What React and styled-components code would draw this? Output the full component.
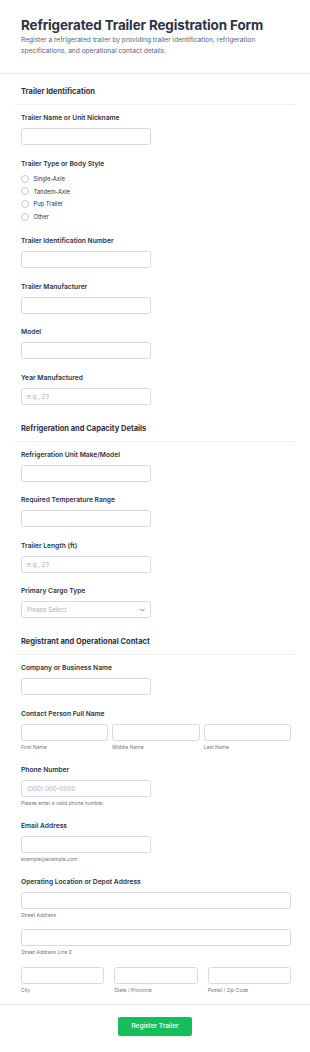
import React from "react";
import styled, { createGlobalStyle } from "styled-components";

const GlobalStyle = createGlobalStyle`
  html, body { margin: 0; padding: 0; background: #ffffff; }
  body { font-family: Inter, "Noto Sans", sans-serif; color: #2c3345; }
  * { box-sizing: border-box; }
`;

const Page = styled.div`
  width: 310px;
  background: #fff;
`;

const Header = styled.header`
  padding: 17px 21px 16px;
  border-bottom: 1px solid #e6e8ee;
`;

const Title = styled.h1`
  margin: 0;
  font-size: 13.4px;
  line-height: 17px;
  font-weight: 700;
  color: #2c3345;
  letter-spacing: -0.1px;
`;

const Description = styled.p`
  margin: 0.5px 0 0;
  font-size: 6.6px;
  line-height: 11px;
  color: #57647e;
`;

const Body = styled.main`
  padding: 0 15px 4px;
`;

const Section = styled.section`
  display: flex;
  flex-direction: column;
`;

const SectionHeading = styled.h2`
  margin: 0;
  padding: 13.5px 6px 7px;
  font-size: 7.5px;
  line-height: 10px;
  font-weight: 700;
  color: #2c3345;
  border-bottom: 1px solid #eff0f4;
`;

const Field = styled.div`
  padding: 8px 4px 5.5px 6px;
  display: flex;
  flex-direction: column;
`;

const Label = styled.label`
  font-size: 6.7px;
  line-height: 10px;
  font-weight: 600;
  color: #2c3345;
  margin-bottom: ${(p) => (p.$tight ? "4px" : "5px")};
`;

const Input = styled.input`
  display: block;
  width: ${(p) => (p.$full ? "100%" : "130px")};
  height: 17px;
  margin: 0;
  padding: 0 5px;
  border: 1px solid #d7dae2;
  border-radius: 2.5px;
  background: #fff;
  font-family: Inter, "Noto Sans", sans-serif;
  font-size: 6.2px;
  color: #2c3345;
  outline: none;
  &::placeholder { color: #a9afbd; }
`;

const SelectBox = styled.div`
  width: 130px;
  height: 17px;
  border: 1px solid #d7dae2;
  border-radius: 2.5px;
  padding: 0 5px;
  display: flex;
  align-items: center;
  justify-content: space-between;
  font-size: 6.2px;
  color: #a9afbd;
`;

const Sub = styled.span`
  display: block;
  margin-top: 3.5px;
  font-size: 5px;
  line-height: 7px;
  color: #6f7788;
`;

const Options = styled.div`
  display: flex;
  flex-direction: column;
`;

const Option = styled.label`
  height: 12.6px;
  display: flex;
  align-items: center;
  gap: 4.5px;
  font-size: 5.8px;
  color: #2c3345;
`;

const Circle = styled.span`
  width: 8px;
  height: 8px;
  border-radius: 50%;
  border: 1px solid #c5cad6;
  background: #fff;
  flex: none;
`;

const Row = styled.div`
  display: grid;
  grid-template-columns: repeat(3, 1fr);
  column-gap: ${(p) => p.$gap}px;
  margin-top: ${(p) => p.$top || 0}px;
`;

const Stack = styled.div`
  margin-top: ${(p) => p.$top || 0}px;
`;

const Footer = styled.footer`
  border-top: 1px solid #e6e8ee;
  padding: 12px 0 17px;
  display: flex;
  justify-content: center;
`;

const SubmitButton = styled.button`
  height: 19px;
  padding: 0 13.5px;
  border: none;
  border-radius: 2px;
  background: #18bd5b;
  color: #fff;
  font-family: Inter, "Noto Sans", sans-serif;
  font-size: 6.5px;
  font-weight: 500;
`;

const Chevron = () => (
  <svg width="5" height="4" viewBox="0 0 10 6" fill="none">
    <path d="M1 1l4 4 4-4" stroke="#57647e" strokeWidth="1.6" strokeLinecap="round" strokeLinejoin="round" />
  </svg>
);

const TextField = ({ label, placeholder }) => (
  <Field>
    <Label>{label}</Label>
    <Input placeholder={placeholder} />
  </Field>
);

export default function App() {
  return (
    <>
      <GlobalStyle />
      <Page>
        <Header>
          <Title>Refrigerated Trailer Registration Form</Title>
          <Description>
            Register a refrigerated trailer by providing trailer identification, refrigeration
            specifications, and operational contact details.
          </Description>
        </Header>
        <Body>
          <Section>
            <SectionHeading>Trailer Identification</SectionHeading>
            <TextField label="Trailer Name or Unit Nickname" />
            <Field>
              <Label $tight>Trailer Type or Body Style</Label>
              <Options>
                {["Single-Axle", "Tandem-Axle", "Pup Trailer", "Other"].map((o) => (
                  <Option key={o}>
                    <Circle />
                    {o}
                  </Option>
                ))}
              </Options>
            </Field>
            <TextField label="Trailer Identification Number" />
            <TextField label="Trailer Manufacturer" />
            <TextField label="Model" />
            <TextField label="Year Manufactured" placeholder="e.g., 23" />
          </Section>
          <Section>
            <SectionHeading>Refrigeration and Capacity Details</SectionHeading>
            <TextField label="Refrigeration Unit Make/Model" />
            <TextField label="Required Temperature Range" />
            <TextField label="Trailer Length (ft)" placeholder="e.g., 23" />
            <Field>
              <Label>Primary Cargo Type</Label>
              <SelectBox>
                Please Select
                <Chevron />
              </SelectBox>
            </Field>
          </Section>
          <Section>
            <SectionHeading>Registrant and Operational Contact</SectionHeading>
            <TextField label="Company or Business Name" />
            <Field>
              <Label>Contact Person Full Name</Label>
              <Row $gap={4}>
                {["First Name", "Middle Name", "Last Name"].map((s) => (
                  <div key={s}>
                    <Input $full />
                    <Sub>{s}</Sub>
                  </div>
                ))}
              </Row>
            </Field>
            <Field>
              <Label>Phone Number</Label>
              <Input placeholder="(000) 000-0000" />
              <Sub>Please enter a valid phone number.</Sub>
            </Field>
            <Field>
              <Label>Email Address</Label>
              <Input />
              <Sub>example@example.com</Sub>
            </Field>
            <Field>
              <Label>Operating Location or Depot Address</Label>
              <Stack>
                <Input $full />
                <Sub>Street Address</Sub>
              </Stack>
              <Stack $top={9.5}>
                <Input $full />
                <Sub>Street Address Line 2</Sub>
              </Stack>
              <Row $gap={10} $top={10.5}>
                {["City", "State / Province", "Postal / Zip Code"].map((s) => (
                  <div key={s}>
                    <Input $full />
                    <Sub>{s}</Sub>
                  </div>
                ))}
              </Row>
            </Field>
          </Section>
        </Body>
        <Footer>
          <SubmitButton type="button">Register Trailer</SubmitButton>
        </Footer>
      </Page>
    </>
  );
}
